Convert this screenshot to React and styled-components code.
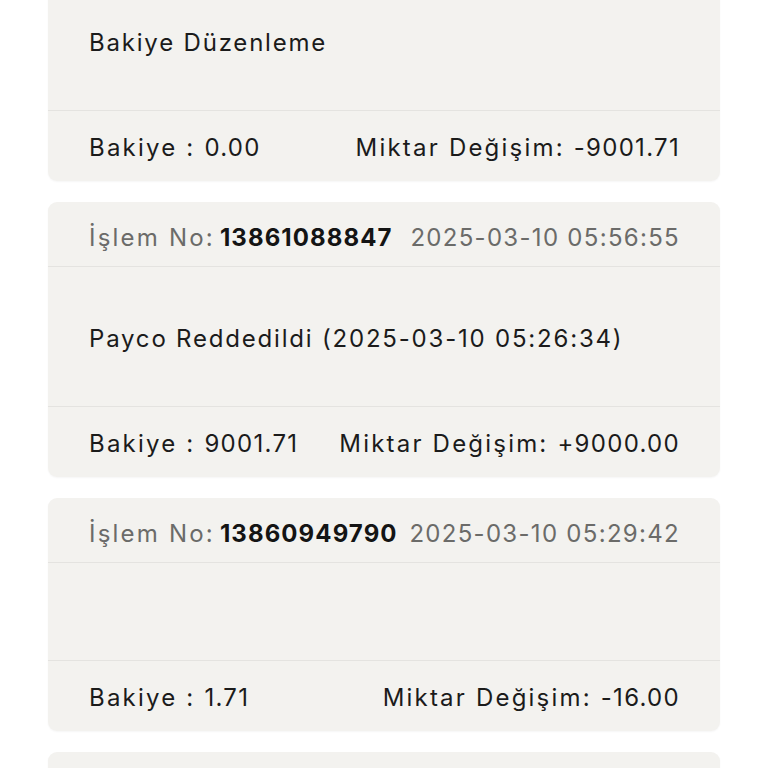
import React from "react";
import styled, { createGlobalStyle } from "styled-components";

const Global = createGlobalStyle`
  *, *::before, *::after { box-sizing: border-box; }
  html, body { margin: 0; padding: 0; background: #ffffff; overflow: hidden; }
  body { font-family: Inter, "Noto Sans", sans-serif; color: #1b1b1b; }
`;

const Viewport = styled.div`
  width: 768px;
  height: 768px;
  overflow: hidden;
`;

const List = styled.div`
  display: flex;
  flex-direction: column;
  gap: 21px;
  padding: 0 48px;
  margin-top: -94px;
`;

const Card = styled.div`
  background: #f3f2ef;
  border-radius: 9px;
  box-shadow: 0 1px 2px rgba(0, 0, 0, 0.04);
  display: flex;
  flex-direction: column;
`;

const Row = styled.div`
  display: flex;
  justify-content: space-between;
  align-items: center;
  padding: 0 40px 0 41px;
  font-size: 24px;
  letter-spacing: 2.2px;
`;

const Header = styled(Row)`
  height: 65px;
  padding-top: 6px;
  border-bottom: 1px solid #e4e3e0;
  color: #6b6b69;
`;

const Body = styled(Row)`
  height: ${(p) => (p.$empty ? 98 : 140)}px;
  padding-top: 3px;
  border-bottom: 1px solid #e4e3e0;
  color: #1b1b1b;
  letter-spacing: 1.8px;
`;

const Footer = styled(Row)`
  height: 70px;
  padding-top: 2px;
  color: #1b1b1b;
`;

const Label = styled.span`
  white-space: nowrap;
`;

const Value = styled.span`
  letter-spacing: 1.3px;
`;

const Num = styled.b`
  color: #141414;
  font-weight: 700;
  letter-spacing: 1.1px;
  margin-left: 5px;
`;

const items = [
  { no: "13861180021", date: "2025-03-10 06:10:12", body: "Bakiye Düzenleme", bal: "0.00", chg: "-9001.71" },
  { no: "13861088847", date: "2025-03-10 05:56:55", body: "Payco Reddedildi (2025-03-10 05:26:34)", bal: "9001.71", chg: "+9000.00" },
  { no: "13860949790", date: "2025-03-10 05:29:42", body: "", bal: "1.71", chg: "-16.00" },
  { no: "13860900000", date: "2025-03-10 05:20:00", body: "", bal: "17.71", chg: "-10.00" },
];

export default function App() {
  return (
    <Viewport>
      <Global />
      <List>
        {items.map((it) => (
          <Card key={it.no}>
            <Header>
              <Label>
                İşlem No:<Num>{it.no}</Num>
              </Label>
              <Label>
                <Value>{it.date}</Value>
              </Label>
            </Header>
            <Body $empty={!it.body}>
              <Label>{it.body}</Label>
            </Body>
            <Footer>
              <Label>
                Bakiye : <Value>{it.bal}</Value>
              </Label>
              <Label>
                Miktar Değişim: <Value>{it.chg}</Value>
              </Label>
            </Footer>
          </Card>
        ))}
      </List>
    </Viewport>
  );
}
